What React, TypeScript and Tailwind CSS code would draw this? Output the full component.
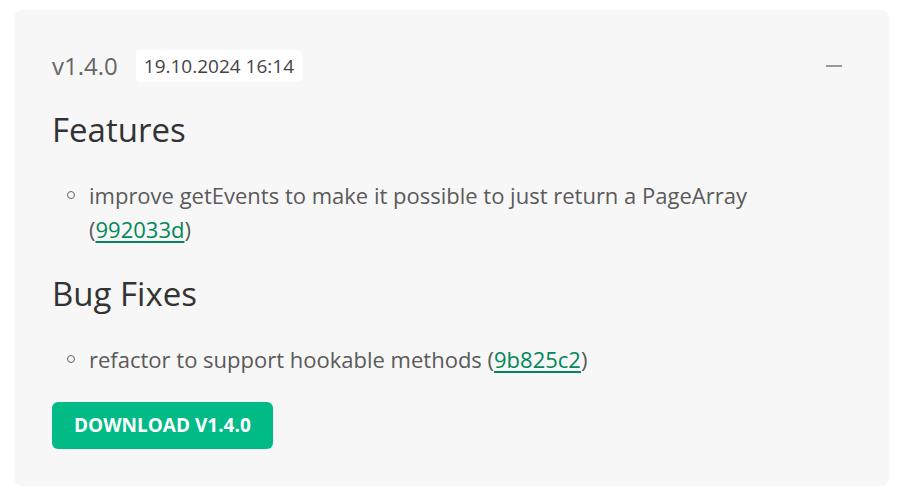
const release = {
  version: "v1.4.0",
  date: "19.10.2024 16:14",
  sections: [
    {
      title: "Features",
      items: [{ text: "improve getEvents to make it possible to just return a PageArray", hash: "992033d" }],
    },
    {
      title: "Bug Fixes",
      items: [{ text: "refactor to support hookable methods", hash: "9b825c2" }],
    },
  ],
};

export default function App() {
  return (
    <div className="min-h-screen bg-white pl-[14px] pt-[10px] font-['Open_Sans',sans-serif]">
      <div className="w-[875px] h-[476px] rounded-lg bg-[#f7f7f7] px-[38px] pt-[40px]">
        {/* header */}
        <div className="flex h-[32px] items-center justify-between">
          <div className="flex items-center gap-[18px]">
            <span className="text-[24px] leading-[32px] text-[#666]">{release.version}</span>
            <span className="rounded bg-white px-[8px] text-[19px] leading-[32px] text-[#444]">{release.date}</span>
          </div>
          <button aria-label="collapse" className="mr-[9px] flex h-[16px] w-[16px] items-center">
            <span className="h-[2px] w-[16px] bg-[#999]" />
          </button>
        </div>

        {release.sections.map((s) => (
          <div key={s.title}>
            <h2 className="mt-[28px] text-[33px] leading-[40px] text-[#333]">{s.title}</h2>
            <ul className="mt-[28px] pl-[37px]">
              {s.items.map((it) => (
                <li key={it.hash} className="relative max-w-[700px] text-[22px] leading-[34px] text-[#5a5a5a]">
                  <span className="absolute left-[-22px] top-[13px] h-[8px] w-[8px] rounded-full border border-[#666]" />
                  {it.text} (
                  <a href="#" className="text-[#00875a] underline underline-offset-[3px]">
                    {it.hash}
                  </a>
                  )
                </li>
              ))}
            </ul>
          </div>
        ))}

        <button className="mt-[26px] h-[47px] rounded-md bg-[#00bb86] px-[22px] text-[19px] font-bold text-white">
          DOWNLOAD V1.4.0
        </button>
      </div>
    </div>
  );
}
